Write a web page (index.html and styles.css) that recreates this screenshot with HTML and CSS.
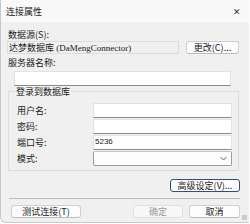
FILE: index.html
```html
<!DOCTYPE html>
<html lang="zh">
<head>
<meta charset="utf-8">
<title>连接属性</title>
<link rel="stylesheet" href="styles.css">
</head>
<body>
<div class="window">
  <div class="titlebar">
    <span class="title">连接属性</span>
    <span class="close">✕</span>
  </div>
  <div class="content">
    <div class="label l-src">数据源(S):</div>
    <div class="row-src">
      <div class="readonly"><span>达梦数据库</span><span class="serif"> (DaMengConnector)</span></div>
      <div class="btn btn-change">更改(C)...</div>
    </div>
    <div class="label l-server">服务器名称:</div>
    <div class="input input-server"></div>
    <div class="group">
      <div class="legend">登录到数据库</div>
      <div class="field"><span class="flabel">用户名:</span><div class="input input-g"></div></div>
      <div class="field"><span class="flabel">密码:</span><div class="input input-g"></div></div>
      <div class="field"><span class="flabel">端口号:</span><div class="input input-g port">5236</div></div>
      <div class="field"><span class="flabel">模式:</span><div class="select"><svg class="chev" width="7" height="5" viewBox="0 0 7 5"><path d="M0.5 1 L3.5 4 L6.5 1" fill="none" stroke="#666" stroke-width="1"/></svg></div></div>
    </div>
    <div class="adv-row"><div class="btn btn-adv">高级设定(V)...</div></div>
    <div class="sep"></div>
    <div class="bottom">
      <div class="btn btn-test">测试连接(T)</div>
      <div class="spacer"></div>
      <div class="btn btn-ok">确定</div>
      <div class="btn btn-cancel">取消</div>
    </div>
  </div>
  <div class="grip"></div>
</div>
</body>
</html>
```
FILE: styles.css
```css
html, body {
  margin: 0;
  padding: 0;
  background: #ffffff;
}
body {
  width: 250px;
  height: 224px;
  overflow: hidden;
  font-family: "Noto Sans CJK SC", "Liberation Sans", sans-serif;
  font-size: 9px;
  line-height: 1;
  color: #1a1a1a;
}
.window {
  position: relative;
  width: 249px;
  height: 223px;
  background: #f0f0f0;
  border-left: 1px solid #c8c8c8;
  border-bottom: 1px solid #c8c8c8;
  border-bottom-left-radius: 6px;
  box-sizing: border-box;
}
.titlebar {
  height: 22px;
  background: #f9f9f9;
  display: flex;
  align-items: center;
  justify-content: space-between;
  padding: 0 8px 0 5px;
}
.title {
  font-size: 9px;
}
.close {
  font-size: 9px;
  color: #333;
}
.content {
  padding: 0 9px 0 6px;
}
.label {
  height: 9px;
}
.l-src {
  margin-top: 8px;
  margin-left: 1px;
}
.row-src {
  display: flex;
  margin-top: 2px;
  height: 13px;
}
.readonly {
  width: 172px;
  height: 13px;
  box-sizing: border-box;
  border: 1px solid #dcdcdc;
  background: #f0f0f0;
  padding: 1px 0 0 1px;
  white-space: nowrap;
  overflow: hidden;
  font-size: 9px;
}
.serif {
  font-family: "Liberation Serif", serif;
  font-size: 9px;
}
.btn {
  box-sizing: border-box;
  height: 13px;
  border: 1px solid #d0d0d0;
  border-bottom-color: #bdbdbd;
  border-radius: 3px;
  background: #fdfdfd;
  display: flex;
  align-items: center;
  justify-content: center;
  font-size: 9px;
}
.btn-change {
  width: 53px;
  margin-left: 7px;
}
.l-server {
  margin-top: 4px;
  margin-left: 1px;
}
.input {
  box-sizing: border-box;
  height: 15px;
  background: #ffffff;
  border: 1px solid #e2e2e2;
  border-bottom: 1px solid #8a8a8a;
}
.input-server {
  margin-top: 4px;
  margin-left: 7px;
  width: 217px;
}
.group {
  position: relative;
  margin-top: 5px;
  margin-left: 1px;
  width: 231px;
  height: 80px;
  box-sizing: border-box;
  border: 1px solid #dcdcdc;
  padding: 10px 0 0 8px;
}
.legend {
  position: absolute;
  left: 6px;
  top: -5px;
  background: #f0f0f0;
  padding: 0 1px;
}
.field {
  display: flex;
  align-items: center;
  height: 16px;
}
.flabel {
  width: 76px;
}
.input-g {
  width: 139px;
  height: 15px;
}
.port {
  font-family: "Liberation Sans", sans-serif;
  font-size: 8px;
  display: flex;
  align-items: center;
  padding-left: 1px;
}
.select {
  box-sizing: border-box;
  width: 139px;
  height: 15px;
  background: #fdfdfd;
  border: 1px solid #9a9a9a;
  border-top-color: #c4c4c4;
  border-radius: 2px;
  display: flex;
  align-items: center;
  justify-content: flex-end;
  padding-right: 4px;
}
.adv-row {
  display: flex;
  justify-content: flex-end;
  margin-top: 8px;
  width: 233px;
}
.btn-adv {
  width: 70px;
  border: 1px solid #2f4f7f;
  border-radius: 3px;
}
.sep {
  margin-top: 6px;
  margin-left: 2px;
  width: 231px;
  height: 1px;
  background: #bcbcbc;
}
.bottom {
  display: flex;
  margin-top: 6px;
  width: 233px;
}
.btn-test {
  width: 70px;
  margin-left: 4px;
}
.spacer {
  flex: 1;
}
.btn-ok {
  width: 50px;
  color: #9a9a9a;
  background: #f7f7f7;
  border-color: #e0e0e0;
}
.btn-cancel {
  width: 51px;
  margin-left: 6px;
}
.grip {
  position: absolute;
  right: 2px;
  bottom: 2px;
  width: 5px;
  height: 5px;
  background:
    radial-gradient(circle, #a0a0a0 0.6px, transparent 0.8px) 0 0 / 2px 2px;
}
```
